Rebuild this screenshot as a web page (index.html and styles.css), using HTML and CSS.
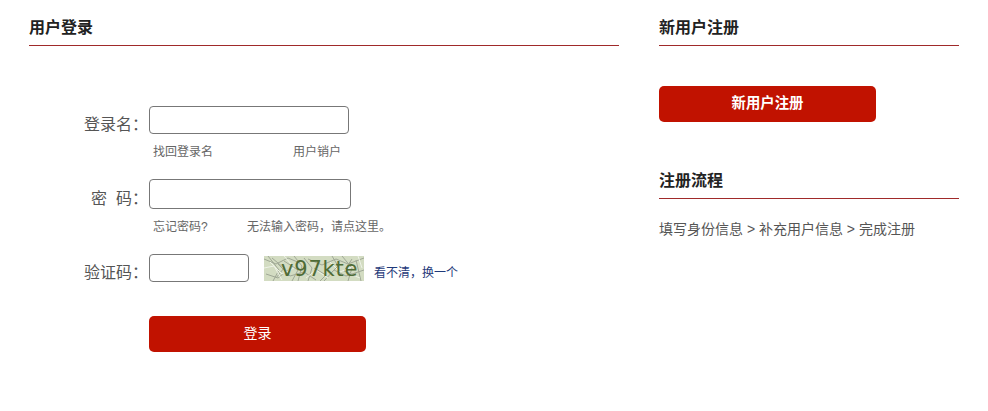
FILE: index.html
```html
<!DOCTYPE html>
<html lang="zh-CN">
<head>
  <meta charset="UTF-8" />
  <meta name="viewport" content="width=device-width, initial-scale=1.0" />
  <title>用户登录</title>
  <link rel="stylesheet" href="styles.css">
</head>
<body>
  <div class="page">
    <!-- Login -->
    <section class="login">
      <h2 class="title">用户登录</h2>
      <form class="login-form">
        <div class="row row-name">
          <label class="row-label" for="username">登录名：</label>
          <input class="field field-name" type="text" id="username">
        </div>
        <div class="help help-name">
          <a href="#">找回登录名</a>
          <a href="#">用户销户</a>
        </div>
        <div class="row row-pass">
          <label class="row-label" for="password">密&nbsp;&nbsp;码：</label>
          <input class="field field-pass" type="password" id="password">
        </div>
        <div class="help help-pass">
          <a href="#">忘记密码?</a>
          <a href="#">无法输入密码，请点这里。</a>
        </div>
        <div class="row row-code">
          <label class="row-label" for="code">验证码：</label>
          <input class="field field-code" type="text" id="code">
          <div class="captcha">
            <svg class="captcha-noise" width="100" height="25" viewBox="0 0 100 25" aria-hidden="true">
              <rect width="100" height="25" fill="#d3dcc2"/>
              <path d="M0 3 12 8 24 2 36 7M4 0 15 14 9 25M14 8 26 20 40 16 52 24M30 0 38 10 34 25M44 3 58 9 72 3 84 8 100 2M60 25 70 14 82 20 100 14M78 0 88 12 84 25M92 4 97 25M2 18 14 22 24 14M50 12 62 19 56 25M8 2 20 12 12 22M20 5 34 14 28 25M68 0 74 10 66 18M88 3 80 15 92 20M40 2 48 12 44 25" fill="none" stroke="#a0a896" stroke-width="1"/>
              <path d="M6 6 18 18 30 12M20 0 28 9M66 6 76 16 90 10M42 22 52 14 64 22M86 18 96 22M0 12 10 10 18 24M94 0 98 12" fill="none" stroke="#eef2e6" stroke-width="1"/>
            </svg>
            <span class="captcha-text">v97kte</span>
          </div>
          <a class="refresh" href="#">看不清，换一个</a>
        </div>
        <div class="actions">
          <button class="btn btn-login" type="submit">登录</button>
        </div>
      </form>
    </section>

    <!-- Register -->
    <aside class="side">
      <h2 class="title">新用户注册</h2>
      <button class="btn btn-register" type="button">新用户注册</button>
      <h2 class="title">注册流程</h2>
      <p class="steps">填写身份信息 &gt; 补充用户信息 &gt; 完成注册</p>
    </aside>
  </div>
</body>
</html>
```

FILE: styles.css
```css
/* Base styling */
body {
  margin: 0;
  background: #fff;
  color: #555;
  font-family: "Liberation Sans", "Noto Sans CJK SC", sans-serif;
}
a {
  text-decoration: none;
}
.page {
  display: flex;
  gap: 40px;
  padding: 16px 0 0 29px;
}
/* Section titles */
.title {
  margin: 0;
  height: 30px;
  line-height: 23px;
  box-sizing: border-box;
  font-size: 16px;
  font-weight: bold;
  color: #222;
  border-bottom: 1px solid #a02a2a;
}
.login {
  width: 590px;
}
.side {
  width: 300px;
}
/* Login form */
.login-form {
  display: flex;
  flex-direction: column;
  padding-top: 60px;
}
.row {
  display: flex;
  align-items: center;
  height: 28px;
}
.row-pass {
  height: 30px;
}
.row-label {
  box-sizing: border-box;
  width: 119px;
  margin-right: 1px;
  padding-top: 9px;
  line-height: 16px;
  text-align: right;
  font-size: 16px;
  color: #555;
}
.field {
  box-sizing: border-box;
  margin: 0;
  padding: 0 6px;
  background: #fff;
  border: 1px solid #777;
  border-radius: 4px;
}
.field-name {
  width: 200px;
  height: 28px;
}
.field-pass {
  width: 202px;
  height: 30px;
}
.field-code {
  width: 100px;
  height: 28px;
}
.help {
  display: flex;
  padding: 11px 0 0 124px;
  height: 14px;
  line-height: 14px;
  font-size: 12px;
}
.help a {
  color: #666;
}
.help-name a:first-child {
  width: 140px;
}
.help-pass a:first-child {
  width: 94px;
}
.help-name {
  margin-bottom: 20px;
}
.help-pass {
  margin-bottom: 20px;
}
/* Captcha */
.captcha {
  position: relative;
  width: 100px;
  height: 25px;
  margin: 1px 0 0 15px;
}
.captcha-noise {
  display: block;
}
.captcha-text {
  position: absolute;
  top: 1px;
  left: 17px;
  line-height: 25px;
  letter-spacing: 0.8px;
  font-family: "DejaVu Sans", sans-serif;
  font-size: 21px;
  color: #4f6b35;
}
.refresh {
  margin: 6px 0 0 10px;
  font-size: 12px;
  color: #1f3a7a;
}
/* Buttons */
.btn {
  display: block;
  width: 217px;
  height: 36px;
  padding: 0 0 6px;
  border: none;
  border-radius: 5px;
  background: #c11200;
  color: #fff;
  font-family: inherit;
  font-size: 14.4px;
  font-weight: bold;
  cursor: pointer;
}
.actions {
  padding: 34px 0 0 120px;
}
.btn-login {
  padding-bottom: 4px;
  font-size: 14px;
  font-weight: normal;
}
.btn-register {
  margin: 40px 0 47px;
}
.steps {
  margin: 22px 0 0;
  font-size: 14px;
  line-height: 16px;
}
```
